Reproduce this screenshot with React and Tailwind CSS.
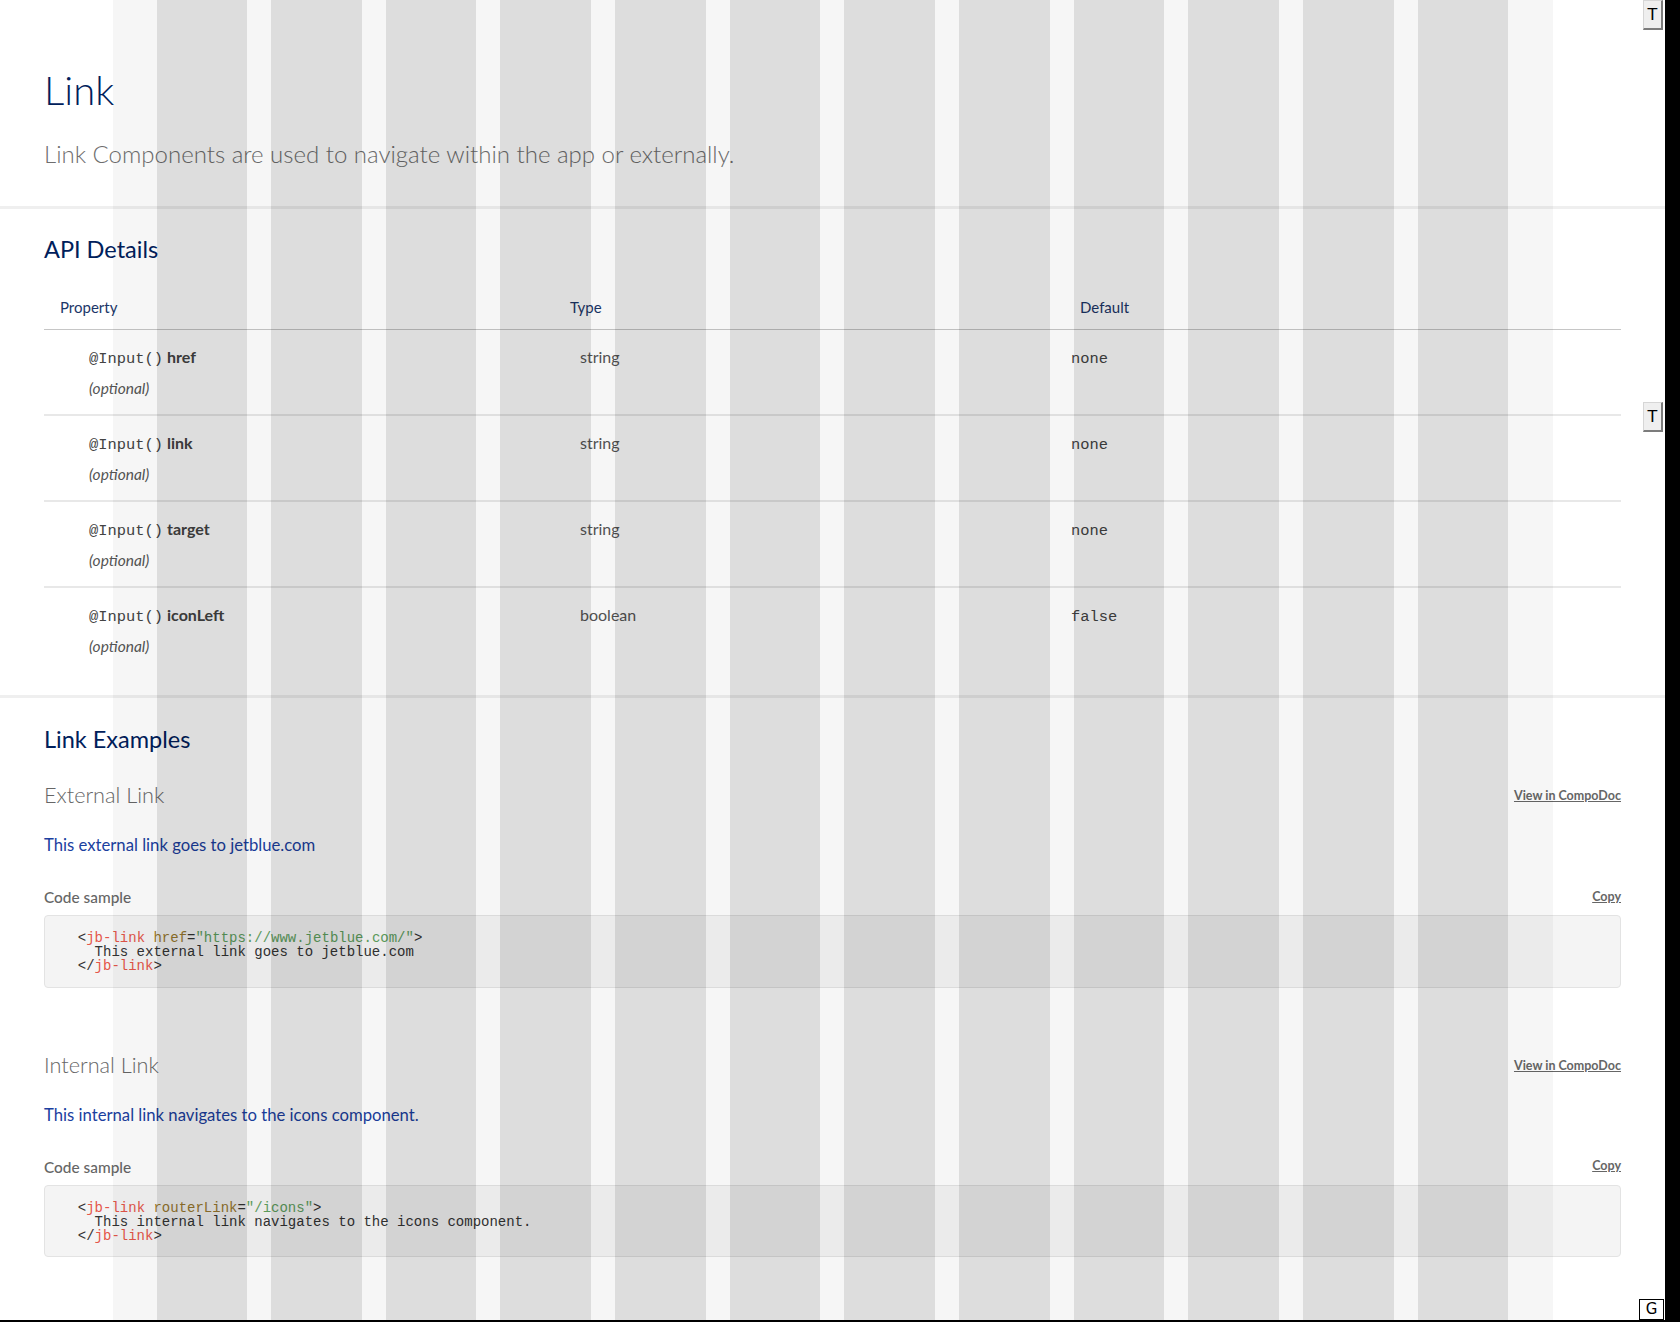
import React from 'react';

// props of the jb-link component
const props = [
  { name: 'href', type: 'string', def: 'none' },
  { name: 'link', type: 'string', def: 'none' },
  { name: 'target', type: 'string', def: 'none' },
  { name: 'iconLeft', type: 'boolean', def: 'false' },
];

const mono = "font-[family-name:'Liberation_Mono',monospace]";

const Tag = ({ children }) => <span className="text-[#e45649]">{children}</span>;
const Attr = ({ children }) => <span className="text-[#9b7a2f]">{children}</span>;
const Str = ({ children }) => <span className="text-[#5fa05f]">{children}</span>;

const ExternalCode = () => (
  <>
    {'  <'}<Tag>jb-link</Tag> <Attr>href</Attr>{'='}<Str>"https://www.jetblue.com/"</Str>{'>\n'}
    {'    This external link goes to jetblue.com\n'}
    {'  </'}<Tag>jb-link</Tag>{'>'}
  </>
);

const InternalCode = () => (
  <>
    {'  <'}<Tag>jb-link</Tag> <Attr>routerLink</Attr>{'='}<Str>"/icons"</Str>{'>\n'}
    {'    This internal link navigates to the icons component.\n'}
    {'  </'}<Tag>jb-link</Tag>{'>'}
  </>
);

const Example = ({ title, linkText, code, className }) => (
  <div className={className}>
    <div className="flex items-center justify-between">
      <h3 className="text-[21.7px] leading-[28px] font-light text-[#666]">{title}</h3>
      <a className="mt-[3px] text-[12.5px] font-bold text-[#666] underline">View in CompoDoc</a>
    </div>
    <a className="mt-6 block text-[16.7px] leading-[24px] text-[#1b3fa0]">{linkText}</a>
    <div className="mt-[30px] flex items-center justify-between">
      <span className="text-[15.4px] leading-[20px] font-medium text-[#666]">Code sample</span>
      <a className="text-[12.5px] font-bold text-[#666] underline">Copy</a>
    </div>
    <pre className={`mt-[8px] rounded-[4px] border border-[#e3e3e3] bg-[#f4f4f4] px-4 pt-[15px] pb-[13px] text-[14px] leading-[14.2px] text-[#333] ${mono}`}>
      {code}
    </pre>
  </div>
);

export default function App() {
  return (
    <div className="flex h-[1322px] overflow-hidden bg-black font-[family-name:Lato,sans-serif]">
      <div className="relative h-[1320px] w-[1665px] shrink-0 bg-white">
        {/* page title */}
        <header className="border-b-[3px] border-[#efefef] px-[44px] pt-[66px] pb-[37px]">
          <h1 className="text-[40px] leading-[48px] font-light text-[#00205b]">Link</h1>
          <p className="mt-[25px] text-[24px] leading-[30px] font-light text-[#6e6e6e]">
            Link Components are used to navigate within the app or externally.
          </p>
        </header>

        {/* api table */}
        <section className="border-b-[3px] border-[#efefef] px-[44px] pt-[25px] pb-[23px]">
          <h2 className="text-[23.5px] leading-[30px] text-[#00205b]">API Details</h2>
          <div className="mt-[33px] grid grid-cols-[510px_510px_1fr] border-b border-[#c6c6c6] pb-3 pl-4 text-[15px] leading-[20px] text-[#1b3668]">
            <span>Property</span>
            <span>Type</span>
            <span>Default</span>
          </div>
          {props.map((p, i) => (
            <div
              key={p.name}
              className={`grid grid-cols-[491px_491px_1fr] pl-[45px] pt-[15px] pb-4 ${i < props.length - 1 ? 'border-b-2 border-[#e8e8e8]' : ''}`}
            >
              <div>
                <div className="h-[24px] text-[16px] leading-[24px] text-[#444]">
                  <span className={`${mono} text-[15.4px] leading-[20px]`}>@Input()</span>{' '}
                  <span className="font-bold">{p.name}</span>
                </div>
                <div className="mt-[9px] text-[15.5px] leading-[20px] italic text-[#555]">(optional)</div>
              </div>
              <div className="text-[16px] leading-[24px] text-[#555]">{p.type}</div>
              <div className={`pt-[2px] text-[15.4px] leading-[24px] text-[#444] ${mono}`}>{p.def}</div>
            </div>
          ))}
        </section>

        {/* examples */}
        <section className="px-[44px] pt-[26px]">
          <h2 className="text-[23.5px] leading-[30px] text-[#00205b]">Link Examples</h2>
          <Example
            className="mt-[27px]"
            title="External Link"
            linkText="This external link goes to jetblue.com"
            code={<ExternalCode />}
          />
          <Example
            className="mt-[63px]"
            title="Internal Link"
            linkText="This internal link navigates to the icons component."
            code={<InternalCode />}
          />
        </section>

        {/* layout grid overlay */}
        <div className="pointer-events-none absolute inset-0 flex justify-center">
          <div className="grid h-full w-[1440px] grid-cols-12 gap-x-6 bg-black/[0.035] px-[44px]">
            {Array.from({ length: 12 }).map((_, i) => (
              <div key={i} className="bg-black/10" />
            ))}
          </div>
        </div>

        {/* debug toggles */}
        <button className="absolute top-0 right-[2px] flex h-[30px] w-[20px] items-center justify-center border border-[#d6d6d6] border-r-2 border-b-2 border-r-[#7c7c7c] border-b-[#7c7c7c] bg-[#efefef] font-[family-name:'DejaVu_Sans',sans-serif] text-[16px] text-black">
          T
        </button>
        <button className="absolute top-[402px] right-[2px] flex h-[30px] w-[20px] items-center justify-center border border-[#d6d6d6] border-r-2 border-b-2 border-r-[#7c7c7c] border-b-[#7c7c7c] bg-[#efefef] font-[family-name:'DejaVu_Sans',sans-serif] text-[16px] text-black">
          T
        </button>
        <button className="absolute right-[1px] bottom-0 flex h-[21px] w-[25px] items-center justify-center border border-black bg-white font-[family-name:'DejaVu_Sans',sans-serif] text-[15px] text-black">
          G
        </button>
      </div>
    </div>
  );
}
